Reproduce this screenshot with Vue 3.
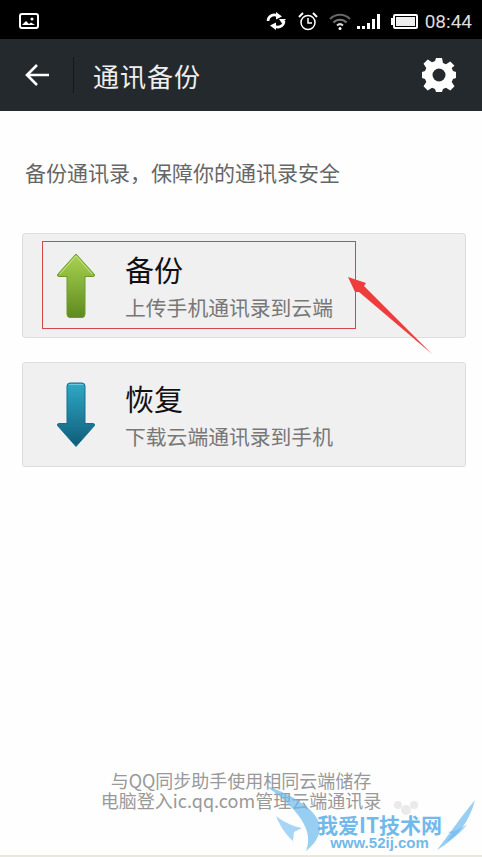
<script setup>
const cards = [
  { id: 'up', title: '备份', sub: '上传手机通讯录到云端' },
  { id: 'down', title: '恢复', sub: '下载云端通讯录到手机' }
]
</script>

<template>
  <main class="page">
    <div class="status">
      <svg class="pic" width="20" height="16" viewBox="0 0 20 16">
        <rect x="1" y="1" width="18" height="14" rx="2" fill="none" stroke="#fff" stroke-width="2" />
        <path d="M3 12l4-4 3 3 2-1.500 4 2.500z" fill="#fff" />
        <circle cx="13" cy="6" r="1.500" fill="#fff" />
      </svg>
      <div class="status-right">
        <svg width="22" height="18" viewBox="0 0 22 18">
          <path d="M3 9a6 6 0 0 1 10-4.500" fill="none" stroke="#fff" stroke-width="2.600" />
          <path d="M11 0l6 4.500-6 3z" fill="#fff" />
          <path d="M19 9a6 6 0 0 1-10 4.500" fill="none" stroke="#fff" stroke-width="2.600" />
          <path d="M11 18l-6-4.500 6-3zM21 7l-4 4.500-3-4.500z" fill="#fff" />
        </svg>
        <svg class="alarm" width="20" height="19" viewBox="0 0 20 19">
          <circle cx="10" cy="10.500" r="7" fill="none" stroke="#fff" stroke-width="1.500" />
          <path d="M10 6v5h4" fill="none" stroke="#fff" stroke-width="1.500" />
          <path d="M1 5l4-4M19 5l-4-4" stroke="#fff" stroke-width="2" />
        </svg>
        <svg class="wifi" width="22" height="17" viewBox="0 0 22 17">
          <path d="M1 6a14 14 0 0 1 20 0" fill="none" stroke="#666" stroke-width="2" />
          <path d="M4.500 9.500a9 9 0 0 1 13 0" fill="none" stroke="#777" stroke-width="2" />
          <path d="M8 12.500a4.500 4.500 0 0 1 6 0" fill="none" stroke="#ddd" stroke-width="2" />
          <circle cx="11" cy="15.500" r="1.500" fill="#fff" />
        </svg>
        <div class="signal">
          <i style="height: 3px"></i><i style="height: 3px"></i><i style="height: 6px"></i><i style="height: 10px"></i><i style="height: 15px"></i>
        </div>
        <div class="battery"><span></span></div>
        <span class="time">08:44</span>
      </div>
    </div>

    <header class="bar">
      <svg class="back" width="26" height="24" viewBox="0 0 26 24">
        <path d="M25 12H3M13 2L3 12l10 10" fill="none" stroke="#fff" stroke-width="2.600" />
      </svg>
      <div class="divider"></div>
      <h1>通讯备份</h1>
      <svg class="gear" width="34" height="34" viewBox="0 0 34 34">
        <path d="M14 0h6l1 5 3 1.300 4.300-2.800 4.200 4.200L29.700 10 31 13l3 1v6l-3 1-1.300 3 2.800 4.300-4.200 4.200L24 29.700 21 31l-1 3h-6l-1-3-3-1.300-4.300 2.800-4.200-4.200L4.300 24 3 21l-3-1v-6l3-1 1.300-3-2.800-4.300 4.200-4.200L10 4.300 13 3z" fill="#fff" />
        <circle cx="17" cy="17" r="6.500" fill="#24292d" />
      </svg>
    </header>

    <section class="content">
      <p class="desc">备份通讯录，保障你的通讯录安全</p>

      <div v-for="card in cards" :key="card.id" class="card">
        <svg class="arrow" width="40" height="66" viewBox="0 0 40 66">
          <defs>
            <linearGradient id="g-up" x1="0" y1="0" x2="0" y2="1">
              <stop offset="0" stop-color="#a9d352" />
              <stop offset="1" stop-color="#5e8a1f" />
            </linearGradient>
            <linearGradient id="g-down" x1="0" y1="0" x2="0" y2="1">
              <stop offset="0" stop-color="#2fa9c6" />
              <stop offset="1" stop-color="#0f5c78" />
            </linearGradient>
          </defs>
          <template v-if="card.id === 'up'">
            <path
              d="M20 1L38.500 21.500Q39 23.500 37 23.500H29V61Q29 64.500 26 64.500H14Q11 64.500 11 61V23.500H3Q1 23.500 1.500 21.500Z"
              fill="url(#g-up)"
              stroke="#6c9a2a"
            />
            <path d="M20 3L4 21" fill="none" stroke="#c8e68a" />
            <path d="M20 3L36 21" fill="none" stroke="#c8e68a" />
          </template>
          <template v-else>
            <path
              d="M14 1H26Q29 1 29 4V41.500H37Q39 41.500 38.500 43.500L20 64.500 1.500 43.500Q1 41.500 3 41.500H11V4Q11 1 14 1Z"
              fill="url(#g-down)"
              stroke="#176f8c"
            />
            <path d="M13 2.500H27" fill="none" stroke="#6cc8de" />
          </template>
        </svg>
        <div class="card-text">
          <div class="title">{{ card.title }}</div>
          <div class="sub">{{ card.sub }}</div>
        </div>
      </div>
    </section>

    <footer class="foot">
      <div>与QQ同步助手使用相同云端储存</div>
      <div>电脑登入ic.qq.com管理云端通讯录</div>
    </footer>
    <div class="strip"></div>

    <!-- annotation drawn over the screenshot -->
    <div class="mark"></div>
    <svg class="pointer" width="95" height="82" viewBox="0 0 95 82">
      <path d="M8 2L26 8 24 11 92 79 19 17 15 17Z" fill="#ee3d3d" />
    </svg>

    <!-- watermark -->
    <svg class="wings" width="220" height="77" viewBox="0 0 220 77">
      <path d="M4 6C30 14 60 32 58 50 56 60 50 66 44 71 50 56 46 36 4 6Z" fill="#6db9ee" opacity=".7" />
      <path d="M14 36C22 42 30 46 40 48L32 52 31 61C24 55 18 46 14 36Z" fill="#6db9ee" opacity=".6" />
      <path d="M213 20C208 40 196 58 175 70 186 56 198 38 213 20Z" fill="#6db9ee" opacity=".7" />
      <path d="M205 44C200 52 192 58 184 62L190 54 186 52C194 51 200 48 205 44Z" fill="#6db9ee" opacity=".6" />
      <g fill="#ddd" opacity=".6">
        <circle cx="144" cy="30" r="5" /><circle cx="152" cy="25" r="4" /><circle cx="136" cy="25" r="4" />
      </g>
    </svg>
    <div class="wm">
      <div class="wm-name">我爱IT技术网</div>
      <div class="wm-url">www.52ij.com</div>
    </div>
  </main>
</template>

<style scoped>
.page {
  position: relative;
  width: 482px;
  height: 857px;
  overflow: hidden;
  display: flex;
  flex-direction: column;
  background: #fefefe;
  font-family: "Noto Sans CJK SC", "Liberation Sans", sans-serif;
}

.status {
  height: 39px;
  flex: none;
  background: #000;
  display: flex;
  align-items: center;
  justify-content: space-between;
  padding: 3px 10px 0 19px;
  box-sizing: border-box;
}

.status-right {
  display: flex;
  align-items: center;
}

.alarm {
  margin-left: 11px;
}

.wifi {
  margin-left: 11px;
}

.signal {
  display: flex;
  align-items: flex-end;
  gap: 2px;
  height: 15px;
  margin-left: 6px;
}

.signal i {
  display: block;
  width: 3px;
  background: #fff;
}

.battery {
  position: relative;
  width: 25px;
  height: 15px;
  border: 2px solid #fff;
  border-radius: 2px;
  margin-left: 13px;
  padding: 1px;
  box-sizing: border-box;
}

.battery::before {
  content: "";
  position: absolute;
  left: -4px;
  top: 2px;
  width: 2px;
  height: 7px;
  background: #fff;
}

.battery span {
  display: block;
  height: 100%;
  background: #eee;
}

.time {
  margin-left: 7px;
  color: #ddd;
  font-family: "Roboto", "Liberation Sans", sans-serif;
  font-size: 19px;
}

.bar {
  height: 72px;
  flex: none;
  background: #24292d;
  display: flex;
  align-items: center;
  padding: 0 26px 0 24px;
  box-sizing: border-box;
}

.divider {
  width: 1px;
  height: 36px;
  background: #14181a;
  margin-left: 23px;
}

h1 {
  margin: 0 0 0 19px;
  flex: 1;
  font-size: 26px;
  font-weight: 400;
  color: #eee;
  letter-spacing: 1px;
}

.content {
  padding: 48px 16px 0 22px;
}

.desc {
  margin: 0 0 47px 3px;
  font-size: 21px;
  line-height: 27px;
  color: #666;
}

.card {
  height: 105px;
  box-sizing: border-box;
  margin-bottom: 24px;
  background: #f0f0f0;
  border: 1px solid #ddd;
  border-radius: 3px;
  display: flex;
  align-items: center;
  padding-left: 33px;
}

.card-text {
  margin-left: 29px;
  padding-top: 4px;
}

.title {
  font-size: 29px;
  line-height: 40px;
  color: #111;
}

.sub {
  font-size: 20.800px;
  line-height: 37px;
  color: #777;
}

.foot {
  margin-top: auto;
  margin-bottom: 47px;
  text-align: center;
  font-size: 18px;
  line-height: 20px;
  color: #999;
}

.strip {
  position: absolute;
  left: 0;
  right: 0;
  bottom: 0;
  height: 2px;
  background: #e8e8dc;
}

.mark {
  position: absolute;
  left: 42px;
  top: 241px;
  width: 314px;
  height: 88px;
  box-sizing: border-box;
  border: 1px solid #d8444c;
}

.pointer {
  position: absolute;
  left: 340px;
  top: 275px;
}

.wings {
  position: absolute;
  left: 262px;
  top: 780px;
}

.wm {
  position: absolute;
  left: 312px;
  top: 813px;
  width: 135px;
  text-align: center;
  color: #5aaee8;
  opacity: .85;
}

.wm-name {
  font-size: 21px;
  line-height: 22px;
  font-weight: 700;
  white-space: nowrap;
}

.wm-url {
  font-family: "Liberation Sans", sans-serif;
  font-size: 15px;
  font-weight: 700;
  line-height: 15px;
}
</style>
